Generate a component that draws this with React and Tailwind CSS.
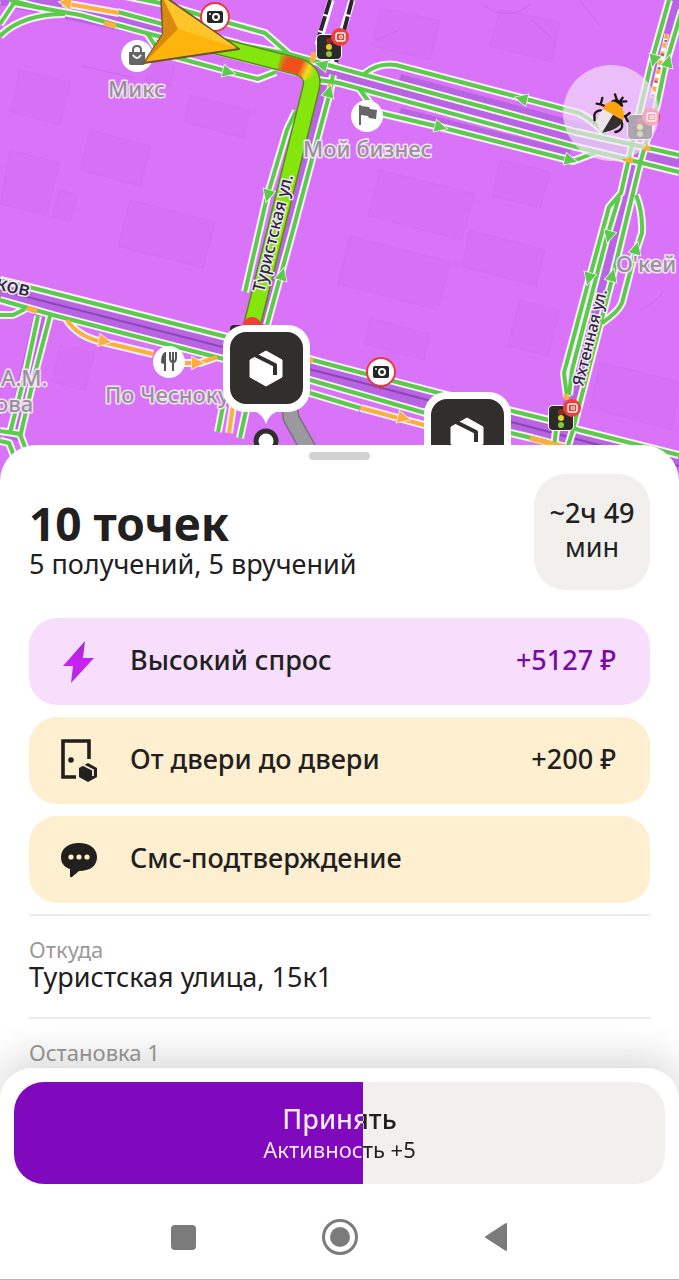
import React from 'react';

const GREEN = '#5bcb4b';
const AMBER = '#fbb03b';

const streets = [
  'M0 -4 L160 30 L339 75 L679 163',
  'M0 290 L340 377 L679 466',
  'M678 0 L650 100 L632 170 L608 260 L568 420 L562 450',
  'M324 80 L262 325',
  'M45 305 L14 440',
];

const roads = [
  { d: 'M0 36 Q22 14 65 14', color: GREEN },
  { d: 'M0 24 L14 3 L80 15 L150 34 L240 57 L300 73', color: GREEN },
  { d: 'M10 0 L40 8', color: GREEN },
  { d: 'M147 33 L160 53 L230 72 L258 79 L276 72', color: GREEN },
  { d: 'M118 12 L170 26 L240 44', color: GREEN },
  { d: 'M125 -4 L160 3 L200 15 L265 33 L289 54', color: GREEN },
  { d: 'M225 42 L289 54 L339 68 L576 132 L626 143 L679 155', color: GREEN },
  { d: 'M318 80 L339 83 L572 146 L626 159 L679 172', color: GREEN },
  { d: 'M364 74 Q378 62 396 65 L579 113 Q590 118 606 134', color: GREEN },
  { d: 'M359 88 L376 112 L440 127 L573 161 L597 152', color: GREEN },
  { d: 'M296 111 L287 130 L267 197 L245 292', color: GREEN },
  { d: 'M333 75 L330 92 L293 230 L267 325', color: GREEN },
  { d: 'M669 0 L652 60 L640 110 L621 193 L609 207 L589 280 L564 373 L567 397', color: GREEN },
  { d: 'M619 197 L606 240 L572 370 L569 395', color: GREEN },
  { d: 'M682 10 L665 67 L657 105 L641 160 L611 283 L572 433 L566 452', color: GREEN },
  { d: 'M636 195 Q643 212 642 233 L634 257 L622 303 Q618 312 602 323', color: GREEN },
  { d: 'M556 430 L554 448', color: GREEN },
  { d: 'M0 280 L33 288 L227 337 L339 367 L439 393 L549 420 L579 430 L679 455', color: GREEN },
  { d: 'M0 300 L53 315 L220 358 L310 380 L422 412 L532 438 L570 448', color: GREEN },
  { d: 'M0 315 L13 315 L25 309', color: GREEN },
  { d: 'M310 393 L360 408', color: GREEN },
  { d: 'M38 316 L27 367 L10 433', color: GREEN },
  { d: 'M50 316 L35 373 L20 437', color: GREEN },
  { d: 'M0 431 L20 434 L26 450', color: GREEN },
  { d: 'M0 441 L9 443 L14 456', color: GREEN },
  { d: 'M223 406 L218 432', color: GREEN },
  { d: 'M247 406 L240 438', color: GREEN },
  { d: 'M233 406 L229 433', color: AMBER },
  { d: 'M63 3 L119 13', color: AMBER },
  { d: 'M67 320 Q78 337 103 342 L153 354', color: AMBER },
  { d: 'M180 363 L200 363 L217 357', color: AMBER },
  { d: 'M361 408 L428 426', color: AMBER },
];

const amberSpots = [
  'M104 23 L116 26',
  'M27 308 L37 311',
  'M308 359 L313 361',
  'M530 438 L568 448',
  'M643 147 L650 149',
  'M625 159 L633 161',
  'M312 62 L314 52',
  'M330 84 L330 88',
  'M566 394 L567 400',
];

const arrows = [
  [228, 72, 14, GREEN],
  [440, 127, 14, GREEN],
  [570, 160, 14, GREEN],
  [522, 99, 194, GREEN],
  [268, 195, 105, GREEN],
  [329, 92, -75, GREEN],
  [282, 275, -75, GREEN],
  [654, 60, 105, GREEN],
  [668, 62, -75, GREEN],
  [589, 278, 105, GREEN],
  [609, 236, 105, GREEN],
  [612, 276, -75, GREEN],
  [636, 249, -75, GREEN],
  [322, 65, 194, GREEN],
  [66, 3, 190, AMBER],
  [104, 341, 10, AMBER],
  [197, 363, 0, AMBER],
  [403, 418, 14, AMBER],
];

const blocks = [
  'M20 70 L70 82 L60 125 L10 112 Z',
  'M90 130 L150 146 L140 186 L80 170 Z',
  'M190 95 L250 110 L244 138 L184 122 Z',
  'M130 200 L215 222 L203 268 L118 246 Z',
  'M10 150 L60 163 L46 215 L0 204 Z',
  'M60 190 L78 195 L70 222 L52 217 Z',
  'M150 60 L175 66 L170 86 L145 80 Z',
  'M380 8 L440 20 L430 60 L372 46 Z',
  'M500 10 L560 22 L552 62 L490 46 Z',
  'M380 170 L475 194 L462 240 L368 216 Z',
  'M500 160 L550 172 L540 208 L492 196 Z',
  'M350 236 L450 262 L438 310 L338 284 Z',
  'M470 230 L545 250 L536 286 L462 266 Z',
  'M370 318 L430 334 L424 360 L364 344 Z',
  'M520 300 L560 310 L548 356 L508 346 Z',
  'M600 362 L679 382 L672 430 L590 408 Z',
  'M60 345 L95 353 L85 390 L52 382 Z',
];

function Road({ d, casing, color = GREEN, width = 4 }) {
  return (
    <path
      d={d}
      fill="none"
      stroke={casing ? '#fbeefb' : color}
      strokeWidth={casing ? width + 4 : width}
      strokeLinejoin="round"
    />
  );
}

function PlaceLabel({ x, y, children }) {
  return (
    <text
      x={x}
      y={y}
      fontSize="22"
      fontWeight="500"
      fill="#969298"
      stroke="#f6e3fb"
      strokeWidth="3"
      strokeLinejoin="round"
      paintOrder="stroke"
    >
      {children}
    </text>
  );
}

function StreetLabel({ x, y, angle, size = 17, children }) {
  return (
    <text
      transform={`translate(${x} ${y}) rotate(${angle})`}
      fontSize={size}
      fontWeight="500"
      fill="#2f2740"
      stroke="#f3e8f6"
      strokeWidth="3"
      strokeLinejoin="round"
      paintOrder="stroke"
    >
      {children}
    </text>
  );
}

function Camera({ x, y }) {
  return (
    <g transform={`translate(${x} ${y})`}>
      <path d="M-4 12 L0 18 L4 12 Z" fill="#e8383f" />
      <circle r="14" fill="#fff" stroke="#e8383f" strokeWidth="2" />
      <rect x="-8" y="-6" width="16" height="12" rx="2" fill="#262626" />
      <circle cx="1" cy="0" r="3" fill="none" stroke="#fff" strokeWidth="2" />
      <circle cx="-5" cy="-3" r="1" fill="#fff" />
    </g>
  );
}

function TrafficLight({ x, y }) {
  return (
    <g transform={`translate(${x} ${y})`}>
      <rect x="-13" y="-13" width="26" height="26" rx="5" fill="#fff" />
      <rect x="-12" y="-12" width="24" height="24" rx="4" fill="#2b2a28" />
      <circle cy="-6" r="3" fill="#8d2a22" />
      <circle cy="0" r="3" fill="#e5d02c" />
      <circle cy="7" r="3" fill="#86c83c" />
      <circle cx="11" cy="-10" r="9" fill="#ee4039" />
      <rect x="7" y="-14" width="9" height="8" rx="2" fill="none" stroke="#fff" strokeWidth="1.4" />
      <circle cx="12" cy="-10" r="1.5" fill="none" stroke="#fff" strokeWidth="1.2" />
    </g>
  );
}

function BoxPin({ x, y }) {
  return (
    <g transform={`translate(${x} ${y})`}>
      <path d="M-16 42 Q-4 44 0 56 Q4 44 16 42 Z" fill="#fff" />
      <rect x="-43" y="-43" width="87" height="87" rx="22" fill="#fff" />
      <rect x="-36" y="-36" width="73" height="72" rx="16" fill="#312f2d" />
      <path d="M0 -17 L16 -8 V9 L0 18 L-16 9 V-8 Z" fill="#fff" stroke="#fff" strokeWidth="1" strokeLinejoin="round" />
      <path d="M-11 -13 L9 -3 V7" fill="none" stroke="#312f2d" strokeWidth="4" strokeLinejoin="round" />
    </g>
  );
}

function CityMap() {
  return (
    <svg
      viewBox="0 0 679 480"
      preserveAspectRatio="xMidYMin slice"
      className="block h-[480px] w-full bg-[#d973f7] font-['Noto_Sans','Open_Sans',sans-serif]"
      role="img"
      aria-label="Карта маршрута"
    >
      <g fill="#cf68ee" fillOpacity="0.28" stroke="#c660e6" strokeOpacity="0.18">
        {blocks.map((d) => (
          <path key={d} d={d} />
        ))}
      </g>
      <g fill="none" stroke="#c05ddf" strokeOpacity="0.5">
        <path d="M82 66 L135 78 M484 6 Q510 22 530 4 M532 20 L550 36 M580 0 L600 26 M640 310 Q655 304 663 292 M45 310 L75 328 M400 30 L376 40" />
      </g>

      <g fill="none" stroke="#b964e2">
        {streets.map((d) => (
          <path key={d} d={d} strokeWidth="18" />
        ))}
        <path d="M0 290 L340 377 L679 466" stroke="#8b46b5" strokeWidth="2" />
        <path d="M400 78 L600 132 M400 112 L570 154" strokeWidth="8" />
      </g>

      {/* railway crossing the top edge */}
      <g fill="none">
        <path d="M331 0 L318 45 M352 0 L331 70" stroke="#fff" strokeWidth="7" />
        <path d="M330 0 L319 36 M352 0 L336 62" stroke="#2c2530" strokeWidth="4" strokeDasharray="15 2" />
      </g>

      {roads.map((r) => (
        <Road key={r.d} d={r.d} casing />
      ))}
      {roads.map((r) => (
        <Road key={r.d} d={r.d} color={r.color} />
      ))}
      {amberSpots.map((d) => (
        <Road key={d} d={d} color={AMBER} width={5} />
      ))}
      <path d="M667 34 L652 98" stroke="#fff" strokeWidth="5" />
      <path d="M667 34 L652 98" stroke={AMBER} strokeWidth="4" strokeDasharray="5 4" />
      <path d="M666 40 L652 98" stroke="#8e55c8" strokeWidth="3" strokeDasharray="2 12" />

      {arrows.map(([x, y, angle, color]) => (
        <path
          key={`${x}-${y}`}
          d="M-5 -6 L7 0 L-5 6 Z"
          transform={`translate(${x} ${y}) rotate(${angle})`}
          fill={color}
          stroke="#fbeefb"
          strokeWidth="1.5"
          paintOrder="stroke"
        />
      ))}

      <defs>
        <linearGradient id="jam" gradientUnits="userSpaceOnUse" x1="276" y1="60" x2="314" y2="76">
          <stop offset="0" stopColor="#84e60c" />
          <stop offset="0.25" stopColor="#f0501c" />
          <stop offset="0.6" stopColor="#f0501c" />
          <stop offset="0.8" stopColor="#f5d820" />
          <stop offset="1" stopColor="#84e60c" />
        </linearGradient>
      </defs>
      <g fill="none" strokeLinejoin="round">
        <path d="M210 44 L296 66 Q315 71 311 88 L252 325" stroke="#578c1c" strokeWidth="18" />
        <path d="M210 44 L296 66 Q315 71 311 88 L252 325" stroke="#84e60c" strokeWidth="15" />
        <path d="M279 62 L296 66 Q308 69 311 78" stroke="url(#jam)" strokeWidth="15" />
        <path d="M289 400 L291 418 L309 450" stroke="#77717c" strokeWidth="17" />
        <path d="M289 400 L291 418 L309 450" stroke="#9c989f" strokeWidth="14" />
      </g>

      <StreetLabel x={264} y={293} angle={-76} size={17}>Туристская ул.</StreetLabel>
      <StreetLabel x={583} y={387} angle={-76} size={16}>Яхтенная ул.</StreetLabel>
      <StreetLabel x={-5} y={289} angle={13} size={20}>ков</StreetLabel>
      <StreetLabel x={-3} y={10} angle={-76} size={16}>я</StreetLabel>

      <PlaceLabel x={108} y={97}>Микс</PlaceLabel>
      <PlaceLabel x={303} y={157}>Мой бизнес</PlaceLabel>
      <PlaceLabel x={105} y={403}>По Чесноку</PlaceLabel>
      <PlaceLabel x={616} y={272}>О'кей</PlaceLabel>
      <PlaceLabel x={1} y={386}>А.М.</PlaceLabel>
      <PlaceLabel x={-5} y={412}>ова</PlaceLabel>

      <circle cx="137" cy="56" r="16" fill="#fff" />
      <path d="M129 52 H145 V63 Q145 65 143 65 H131 Q129 65 129 63 Z" fill="#666" />
      <path d="M133 52 V50 Q133 46 137 46 Q141 46 141 50 V52" fill="none" stroke="#666" strokeWidth="2" />
      <path d="M133 55 Q137 61 141 55" fill="none" stroke="#fff" strokeWidth="2" />

      <circle cx="367" cy="116" r="16" fill="#fff" />
      <path d="M360 105 V125" stroke="#666" strokeWidth="2" />
      <path d="M361 106 L369 107 L370 109 L377 110 L376 119 L369 118 L368 116 L361 115 Z" fill="#666" />

      <circle cx="169" cy="362" r="16" fill="#fff" />
      <path d="M165 352 Q161 354 161 363 L164 364 V371 H166 V352 Z" fill="#555" />
      <path d="M170 352 V358 Q170 362 173 362 Q176 362 176 358 V352 M173 352 V371" fill="none" stroke="#555" strokeWidth="2" />

      <TrafficLight x={329} y={47} />
      <TrafficLight x={561} y={418} />
      <TrafficLight x={640} y={127} />
      <Camera x={215} y={17} />
      <Camera x={381} y={372} />

      <rect x="230" y="325" width="20" height="16" rx="4" fill="#2b2a28" />
      <circle cx="252" cy="327" r="10" fill="#ee4039" />
      <circle cx="266" cy="441" r="10" fill="#fff" stroke="#312f2d" strokeWidth="5" />
      <BoxPin x={266} y={368} />
      <BoxPin x={467} y={435} />

      <g strokeLinejoin="round">
        <path d="M161 -6 L239 49 L144 63 L163 34 Z" fill="#fdb50d" stroke="#6b5330" strokeWidth="2" />
        <path d="M162 -4 L178 29 L144 63 L163 34 Z" fill="#d9890f" />
        <path d="M162 -4 L178 29 L237 48 Z" fill="#fcc62a" />
      </g>
    </svg>
  );
}

function BugIcon() {
  return (
    <svg viewBox="95 95 120 126" className="h-[42px] w-10" aria-hidden="true">
      <g fill="none" stroke="#1c1712" strokeWidth="7" strokeLinecap="round" strokeLinejoin="round">
        <path d="M173 120 L167 102 M184 124 L201 123 M183 122 L190 112" />
        <path d="M138 138 L124 132 L112 130 M124 132 L129 113" />
        <path d="M126 150 Q108 150 105 164 L106 180" />
        <path d="M188 168 L200 167 L211 158 M198 168 L205 183" />
        <path d="M184 180 Q192 192 186 204 Q180 213 168 215" />
      </g>
      <path d="M153 127 Q160 114 177 118 Q193 124 191 140 Z" fill="#1c1712" />
      <path d="M131 146 Q140 122 166 124 Q196 136 194 172 L190 180 Z" fill="#ffa40a" />
      <path d="M131 147 L161 163 L128 217 Q109 198 116 172 Q120 156 131 147 Z" fill="#ece6ea" />
      <path d="M161 163 L190 180 Q182 208 128 217 Z" fill="#332f2d" />
    </svg>
  );
}

function BoltIcon() {
  return (
    <svg viewBox="0 0 40 44" className="h-11 w-10" aria-hidden="true">
      <defs>
        <linearGradient id="bolt" x1="0" y1="0" x2="0" y2="1">
          <stop offset="0" stopColor="#9a2fc0" />
          <stop offset="0.5" stopColor="#cb20f5" />
          <stop offset="1" stopColor="#b32bd8" />
        </linearGradient>
      </defs>
      <path d="M26 1 L4 26 H14 L12 43 L35 18 H24 Z" fill="url(#bolt)" />
    </svg>
  );
}

function DoorIcon() {
  return (
    <svg viewBox="0 0 40 44" className="h-11 w-10" aria-hidden="true">
      <path d="M17 38 H4 V2 H30 V20" fill="none" stroke="#21201f" strokeWidth="3.6" />
      <circle cx="12" cy="21" r="2.8" fill="#21201f" />
      <path d="M29 24 L38 29 V38 L29 43 L20 38 V29 Z" fill="#21201f" />
      <path d="M24 26 L34 31 V37" fill="none" stroke="#fdefcf" strokeWidth="1.8" />
    </svg>
  );
}

function ChatIcon() {
  return (
    <svg viewBox="0 0 40 44" className="h-11 w-10" aria-hidden="true">
      <path d="M20 5 C31 5 38 11 38 19 C38 28 31 33 20 33 L13 39 Q11 40 11 38 L11 31 C5 29 2 25 2 19 C2 11 9 5 20 5 Z" fill="#21201f" />
      <circle cx="12" cy="19" r="2.6" fill="#fdefcf" />
      <circle cx="20" cy="19" r="2.6" fill="#fdefcf" />
      <circle cx="28" cy="19" r="2.6" fill="#fdefcf" />
    </svg>
  );
}

const options = [
  { icon: BoltIcon, title: 'Высокий спрос', price: '+5127 ₽', box: 'bg-[#f6defc]', priceColor: 'text-[#7a0aa8]' },
  { icon: DoorIcon, title: 'От двери до двери', price: '+200 ₽', box: 'bg-[#fdefcf]', priceColor: 'text-[#21201f]' },
  { icon: ChatIcon, title: 'Смс-подтверждение', box: 'bg-[#fdefcf]' },
];

const stops = [
  { label: 'Откуда', address: 'Туристская улица, 15к1' },
  { label: 'Остановка 1' },
];

function OptionRow({ icon: Icon, title, price, box, priceColor }) {
  return (
    <li className={`flex h-[87px] items-center rounded-[28px] pr-[34px] pl-[30px] text-[27px] leading-9 font-medium ${box}`}>
      <Icon />
      <span className="ml-[31px] flex-1 pb-1">{title}</span>
      {price && <span className={`pb-1 ${priceColor}`}>{price}</span>}
    </li>
  );
}

function AcceptButton({ progress }) {
  const stop = `${progress}%`;
  return (
    <button
      type="button"
      className="flex h-[102px] w-full flex-col justify-center rounded-[30px]"
      style={{ backgroundImage: `linear-gradient(to right, #8009bd ${stop}, #f1f0ec ${stop})` }}
    >
      <span
        className="block w-full bg-clip-text text-center text-transparent"
        style={{ backgroundImage: `linear-gradient(to right, #fbeaff ${stop}, #21201f ${stop})` }}
      >
        <span className="block text-[27px] leading-8 font-medium">Принять</span>
        <span className="block text-[22px] leading-7">Активность +5</span>
      </span>
    </button>
  );
}

export default function App() {
  return (
    <div className="bg-white font-['Noto_Sans','Open_Sans',sans-serif] text-[#21201f]">
      <div className="relative">
        <CityMap />
        <button
          type="button"
          aria-label="Сообщить об ошибке"
          className="absolute top-[65px] right-5 flex size-24 items-center justify-center rounded-full bg-[#f6e6fb]/65"
        >
          <BugIcon />
        </button>
      </div>

      <main className="relative -mt-[35px] rounded-t-[36px] bg-white px-[29px] pt-[7px]">
        <div className="mx-auto h-2 w-[61px] rounded-full bg-[#d2d2d2]" />

        <header className="mt-[14px] flex items-start justify-between">
          <div className="pt-6">
            <h1 className="text-[46px] leading-[50px] font-bold">10 точек</h1>
            <p className="text-[27px] leading-8">5 получений, 5 вручений</p>
          </div>
          <div className="flex size-[116px] flex-col items-center rounded-[32px] bg-[#f1f0ec] pt-[22px] text-[27px] leading-[34px]">
            <span className="font-medium whitespace-nowrap">~2ч 49</span>
            <span>мин</span>
          </div>
        </header>

        <ul className="mt-7 flex flex-col gap-3">
          {options.map((o) => (
            <OptionRow key={o.title} {...o} />
          ))}
        </ul>

        <dl className="mt-[11px]">
          {stops.map((s) => (
            <div key={s.label} className="border-t-2 border-[#ececec] pt-5 pb-[25px]">
              <dt className="text-[22px] leading-[26px] text-[#9b9a99]">{s.label}</dt>
              {s.address && <dd className="text-[27px] leading-[30px]">{s.address}</dd>}
            </div>
          ))}
        </dl>
      </main>

      <footer className="relative -mt-[22px] rounded-t-[32px] bg-white shadow-[0_-10px_40px_rgba(0,0,0,0.16)]">
        <div className="px-[14px] pt-[14px]">
          <AcceptButton progress={53.6} />
        </div>
        <nav className="mt-[35px] flex items-center justify-center gap-[120px] border-b border-[#b5b5b5] pb-[24px]">
          <button type="button" aria-label="Недавние" className="flex size-9 items-center justify-center">
            <span className="size-[25px] rounded bg-[#7b7b7b]" />
          </button>
          <button type="button" aria-label="Домой" className="flex size-9 items-center justify-center rounded-full border-[3px] border-[#7b7b7b]">
            <span className="size-5 rounded-full bg-[#7b7b7b]" />
          </button>
          <button type="button" aria-label="Назад" className="flex size-9 items-center justify-center">
            <svg viewBox="0 0 24 30" className="h-[30px] w-6" aria-hidden="true">
              <path d="M22 2 V28 L2 15 Z" fill="#7b7b7b" stroke="#7b7b7b" strokeWidth="2" strokeLinejoin="round" />
            </svg>
          </button>
        </nav>
      </footer>
    </div>
  );
}
